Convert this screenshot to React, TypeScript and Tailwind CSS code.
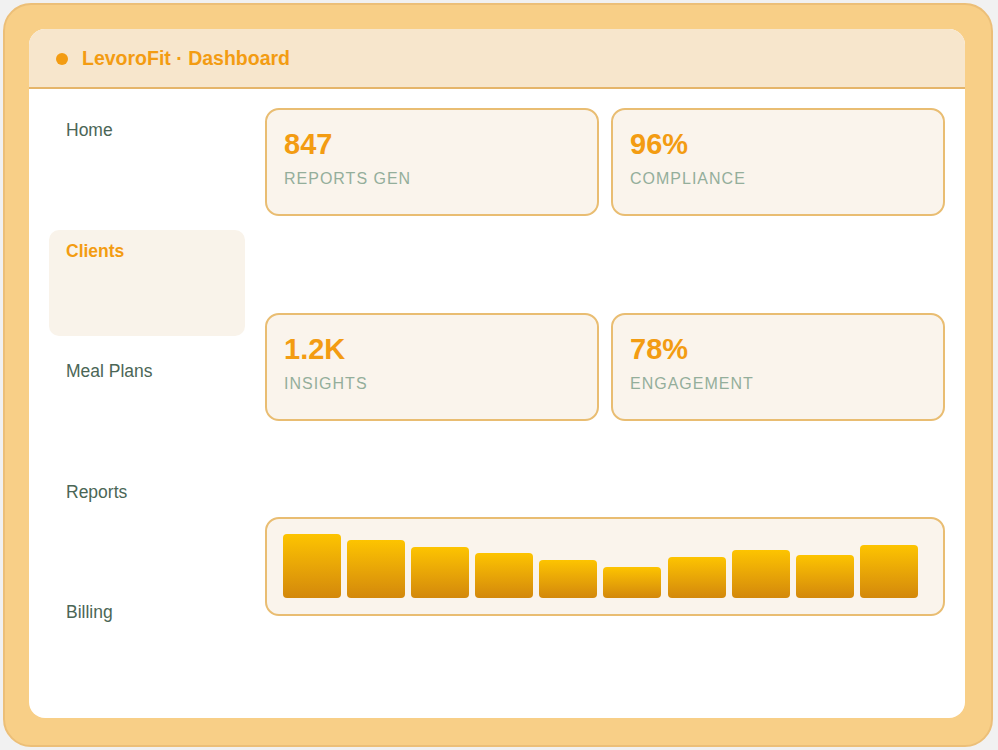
import React from "react";

const navItems = ["Home", "Clients", "Meal Plans", "Reports", "Billing"];
const stats = [
  { value: "847", label: "Reports Gen" },
  { value: "96%", label: "Compliance" },
  { value: "1.2K", label: "Insights" },
  { value: "78%", label: "Engagement" },
];
const bars = [64, 58, 51, 45, 38, 31, 41, 48, 43, 53];

function StatCard({ value, label }: { value: string; label: string }) {
  return (
    <div className="h-[108px] rounded-[14px] border-2 border-[#e9bd72] bg-[#faf4ec] px-[17px] pt-[17px]">
      <div className="text-[29px] font-bold leading-[35px] text-[#f39c12]">{value}</div>
      <div className="mt-[6px] text-[16px] uppercase leading-[22px] tracking-[1px] text-[#94ae9b]">
        {label}
      </div>
    </div>
  );
}

export default function App() {
  return (
    <div
      className="h-[750px] w-[998px] bg-[#f1f1f1] pl-[3px] pt-[3px]"
      style={{ fontFamily: '"Liberation Sans", Arial, sans-serif' }}
    >
      <div className="h-[744px] w-[990px] rounded-[28px] border-2 border-[#ecbf78] bg-[#f8cf87] pb-[27px] pl-[24px] pr-[26px] pt-[24px]">
        <div className="flex h-full flex-col overflow-hidden rounded-[16px] bg-white">
          <div className="flex h-[60px] shrink-0 items-center gap-[14px] border-b-2 border-[#e5b56a] bg-[#f7e6cc] pl-[27px] pt-[2px]">
            <span className="h-[12px] w-[12px] rounded-full bg-[#f39c12]" />
            <span className="text-[19.5px] font-bold text-[#f39c12]">LevoroFit · Dashboard</span>
          </div>
          <div className="flex min-h-0 flex-1 gap-5 px-5 pb-5 pt-[19px]">
            <nav className="flex w-[196px] shrink-0 flex-col gap-[14px] pt-[1px]">
              {navItems.map((item) => {
                const active = item === "Clients";
                return (
                  <div
                    key={item}
                    className={
                      active
                        ? "flex-1 rounded-[10px] bg-[#f9f3ea] px-[17px] pt-[10px] text-[17.5px] font-bold leading-[22px] text-[#f39c12]"
                        : "flex-1 rounded-[10px] px-[17px] pt-[10px] text-[17.5px] leading-[22px] text-[#4b6656]"
                    }
                  >
                    {item}
                  </div>
                );
              })}
            </nav>
            <main className="grid min-w-0 flex-1 grid-rows-3 items-start gap-6">
              <div className="grid grid-cols-2 gap-3">
                <StatCard {...stats[0]} />
                <StatCard {...stats[1]} />
              </div>
              <div className="grid grid-cols-2 gap-3">
                <StatCard {...stats[2]} />
                <StatCard {...stats[3]} />
              </div>
              <div className="rounded-[14px] border-2 border-[#e9bd72] bg-[#faf4ec] px-4 pb-4 pt-[15px]">
                <div className="flex h-[64px] items-end gap-[6.1px]">
                  {bars.map((h, i) => (
                    <div
                      key={i}
                      className="w-[58px] shrink-0 rounded-[4px] bg-gradient-to-b from-[#fdc400] to-[#d3880b]"
                      style={{ height: `${h}px` }}
                    />
                  ))}
                </div>
              </div>
            </main>
          </div>
        </div>
      </div>
    </div>
  );
}
